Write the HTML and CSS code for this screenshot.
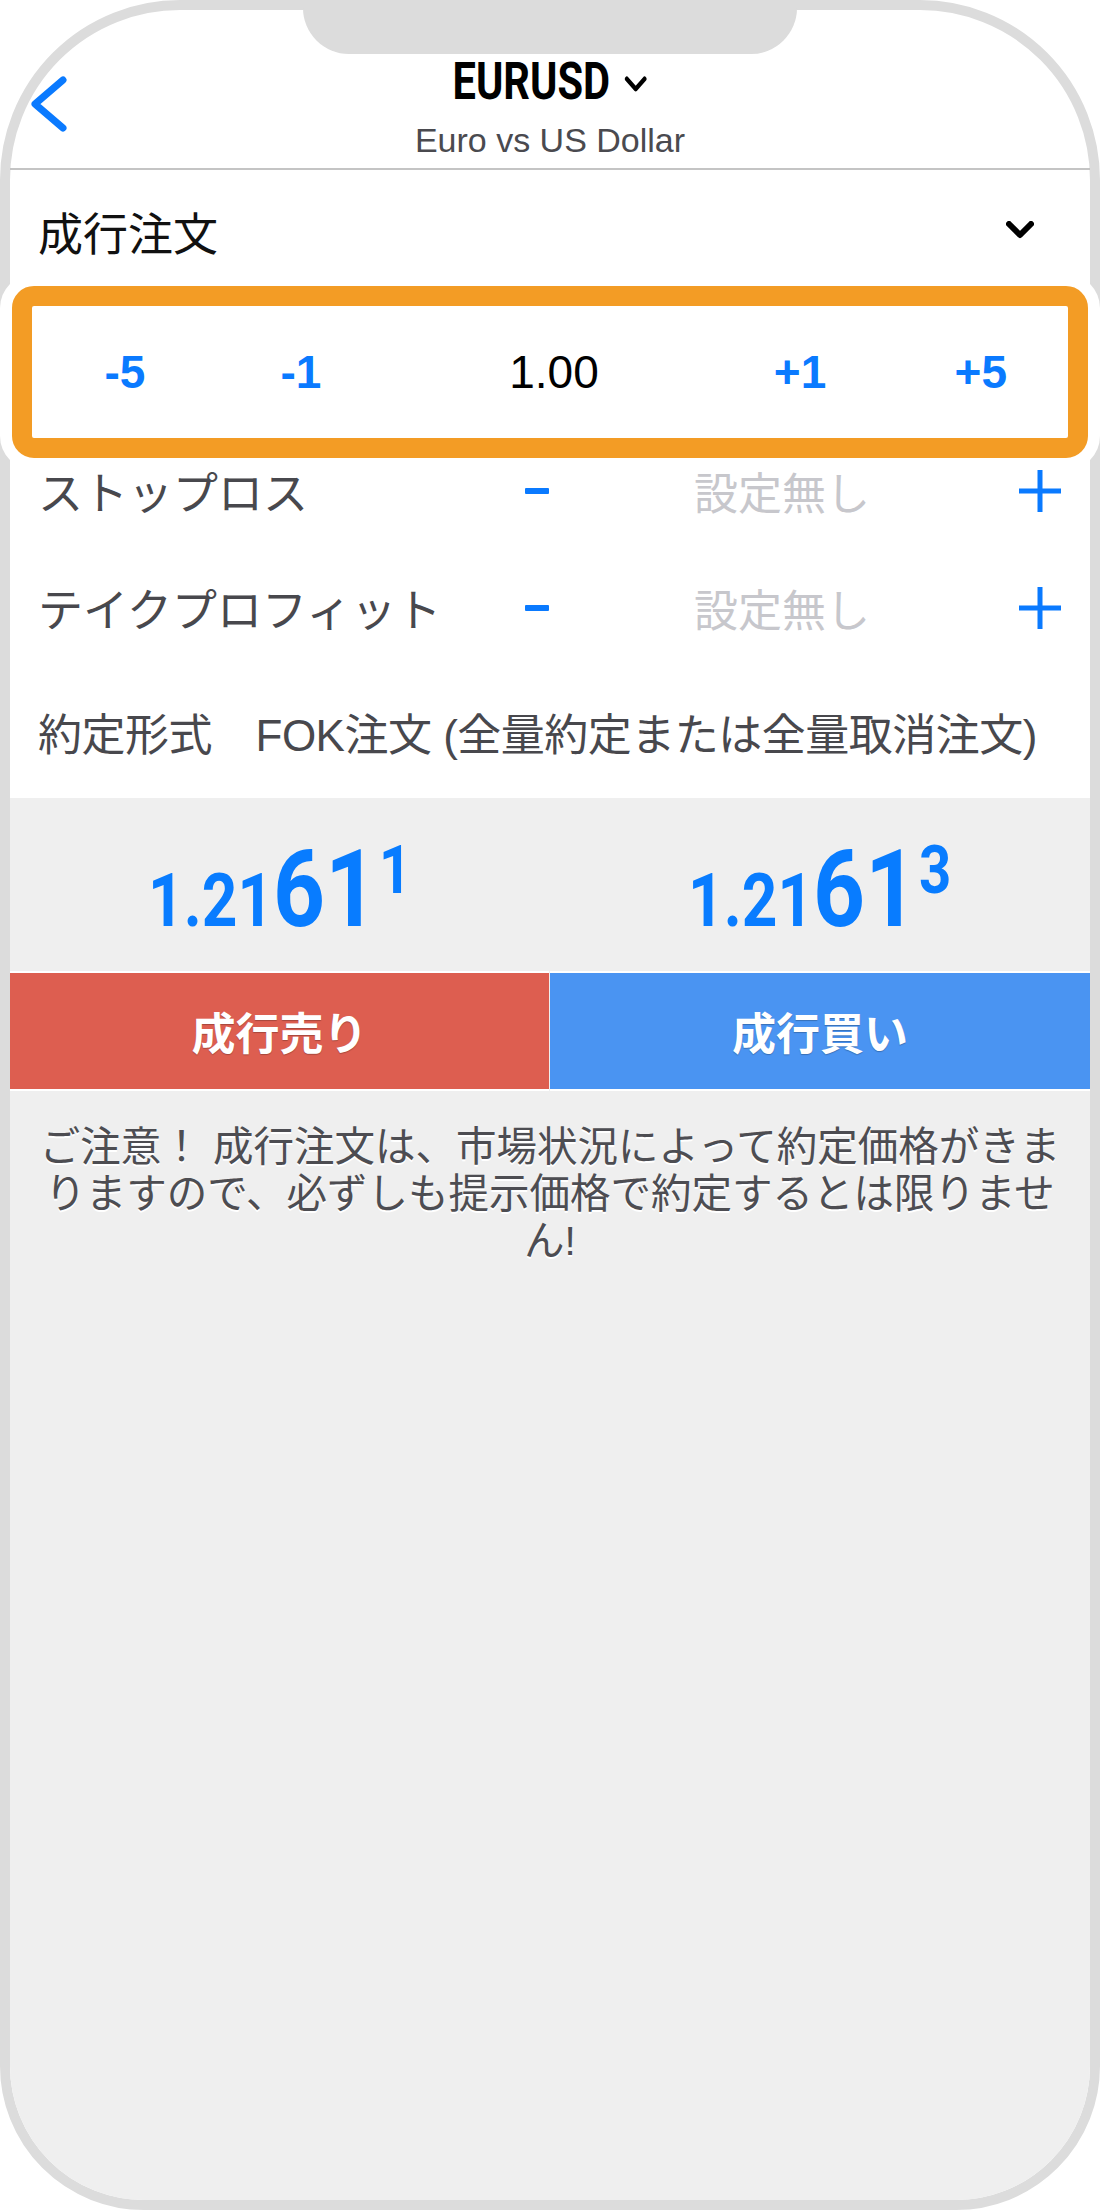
FILE: index.html
```html
<!DOCTYPE html>
<html lang="ja">
<head>
  <meta charset="UTF-8">
  <meta name="viewport" content="width=device-width, initial-scale=1.0">
  <title>EURUSD 成行注文</title>
  <link rel="stylesheet" href="styles.css">
</head>
<body>
  <div class="phone">
    <div class="notch"></div>

    <header class="nav">
      <a class="back" href="#">
        <svg width="40" height="56" viewBox="0 0 40 56"><polyline points="33,4 5,28 33,52" fill="none" stroke="#0a7aff" stroke-width="7" stroke-linecap="round" stroke-linejoin="round"/></svg>
      </a>
      <div class="nav-title">
        <div class="symbol">
          <span>EURUSD</span>
          <svg width="32" height="18" viewBox="0 0 32 18"><polyline points="5,4 16,14 27,4" fill="none" stroke="#000" stroke-width="5" stroke-linecap="round" stroke-linejoin="round"/></svg>
        </div>
        <div class="symbol-desc">Euro vs US Dollar</div>
      </div>
      <div></div>
    </header>

    <div class="order-type">
      <span>成行注文</span>
      <svg width="28" height="20" viewBox="0 0 28 20"><polyline points="3,3 14,14 25,3" fill="none" stroke="#000" stroke-width="6" stroke-linecap="round" stroke-linejoin="round"/></svg>
    </div>

    <div class="lot">
      <span class="step">-5</span>
      <span class="step">-1</span>
      <span class="volume">1.00</span>
      <span class="step">+1</span>
      <span class="step last">+5</span>
    </div>

    <div class="field-row first">
      <span class="field-label">ストップロス</span>
      <svg width="24" height="6" viewBox="0 0 24 6"><rect width="24" height="6" rx="1" fill="#0a7aff"/></svg>
      <span class="field-value">設定無し</span>
      <svg width="42" height="42" viewBox="0 0 42 42"><path d="M21 0V42M0 21H42" stroke="#0a7aff" stroke-width="5"/></svg>
    </div>

    <div class="field-row">
      <span class="field-label">テイクプロフィット</span>
      <svg width="24" height="6" viewBox="0 0 24 6"><rect width="24" height="6" rx="1" fill="#0a7aff"/></svg>
      <span class="field-value">設定無し</span>
      <svg width="42" height="42" viewBox="0 0 42 42"><path d="M21 0V42M0 21H42" stroke="#0a7aff" stroke-width="5"/></svg>
    </div>

    <div class="fill-row">約定形式　FOK注文 (全量約定または全量取消注文)</div>

    <section class="trade">
      <div class="quotes">
        <div class="quote">
          <span class="price"><span class="p-small">1.21</span><span class="p-big">61</span><span class="p-sup">1</span></span>
        </div>
        <div class="quote">
          <span class="price"><span class="p-small">1.21</span><span class="p-big">61</span><span class="p-sup">3</span></span>
        </div>
      </div>

      <div class="buttons">
        <button class="sell">成行売り</button>
        <button class="buy">成行買い</button>
      </div>

      <p class="notice">ご注意！ 成行注文は、市場状況によって約定価格がきまりますので、必ずしも提示価格で約定するとは限りません!</p>
    </section>
  </div>
</body>
</html>
```

FILE: styles.css
```css
body {
  margin: 0;
  font-family: "Liberation Sans", "Noto Sans CJK JP", sans-serif;
  background: #fff;
}
.phone {
  position: relative;
  width: 1100px;
  height: 2210px;
  box-sizing: border-box;
  border: 10px solid #dcdcdc;
  border-radius: 180px 180px 144px 144px;
  background: #fff;
  display: flex;
  flex-direction: column;
}
.notch {
  position: absolute;
  top: -10px;
  left: 293px;
  width: 494px;
  height: 54px;
  background: #dcdcdc;
  border-radius: 0 0 46px 46px;
}

/* header */
.nav {
  display: grid;
  grid-template-columns: 1fr auto 1fr;
  padding: 46px 0 8px;
  border-bottom: 2px solid #c4c4c4;
}
.back {
  align-self: start;
  margin: 20px 0 0 20px;
  width: 40px;
  height: 56px;
}
.nav-title {
  text-align: center;
}
.symbol {
  display: inline-flex;
  align-items: center;
  gap: 16px;
  height: 52px;
  font-family: Roboto, sans-serif;
  font-weight: 700;
  font-size: 52px;
  line-height: 52px;
  color: #000;
  transform: scaleX(0.8);
}
.symbol svg {
  margin-top: 4px;
}
.symbol-desc {
  margin-top: 12px;
  font-size: 34px;
  line-height: 40px;
  color: #4a4a4f;
}

/* order type */
.order-type {
  height: 116px;
  box-sizing: border-box;
  padding: 6px 56px 0 28px;
  display: flex;
  align-items: center;
  justify-content: space-between;
  font-size: 45px;
  color: #111;
}

/* lot stepper */
.lot {
  margin: 0 2px;
  height: 172px;
  box-sizing: border-box;
  border: 20px solid #f39c25;
  border-radius: 22px;
  box-shadow: 0 0 0 12px #fff;
  display: grid;
  grid-template-columns: 186px 166px 340px 152px 192px;
  align-items: center;
  justify-items: center;
  font-size: 46px;
}
.step {
  font-weight: 700;
  color: #0a7aff;
}
.step.last {
  justify-self: end;
  margin-right: 61px;
}
.volume {
  color: #000;
}

/* SL / TP rows */
.field-row {
  height: 117px;
  box-sizing: border-box;
  padding: 0 2px 0 28px;
  display: grid;
  grid-template-columns: 464px 70px 420px 96px;
  align-items: center;
  justify-items: center;
  font-size: 45px;
}
.field-row.first {
  height: 91px;
  padding-bottom: 27px;
}
.field-label {
  justify-self: start;
  color: #48484d;
}
.field-value {
  font-size: 44px;
  color: #c7c7cc;
}

.fill-row {
  height: 132px;
  box-sizing: border-box;
  padding: 0 0 0 28px;
  display: flex;
  align-items: center;
  font-size: 44px;
  letter-spacing: -0.5px;
  color: #48484d;
  white-space: nowrap;
}

/* quotes + buttons */
.trade {
  flex: 1;
  background: #efefef;
  border-radius: 0 0 134px 134px;
}
.quotes {
  height: 173px;
  box-sizing: border-box;
  padding-bottom: 28px;
  display: grid;
  grid-template-columns: 1fr 1fr;
  align-items: end;
}
.quote {
  text-align: center;
}
.price {
  display: inline-block;
  font-family: Roboto, sans-serif;
  font-weight: 700;
  font-size: 108px;
  line-height: 1;
  color: #087cff;
  transform: scaleX(0.84);
}
.p-small {
  font-size: 74px;
}
.p-sup {
  font-size: 67px;
  vertical-align: 33px;
  margin-left: 2px;
}

.buttons {
  display: grid;
  grid-template-columns: 539px 1fr;
  gap: 1px;
}
.buttons button {
  height: 120px;
  border: none;
  border-top: 2px solid;
  border-bottom: 2px solid;
  font-family: "Noto Sans CJK JP", sans-serif;
  font-size: 44px;
  font-weight: 700;
  color: #fff;
  text-shadow: 0 1px 1px rgba(0, 0, 0, 0.25);
  cursor: pointer;
}
.sell {
  background: #dd5e50;
  border-color: #d2493d;
}
.buy {
  background: #4a94f2;
  border-color: #3a85ea;
}

.notice {
  margin: 0;
  padding: 33px 20px 0;
  text-align: center;
  font-size: 40.5px;
  line-height: 47px;
  color: #4d4d52;
  text-shadow: 0 2px 0 #fff;
}
```
